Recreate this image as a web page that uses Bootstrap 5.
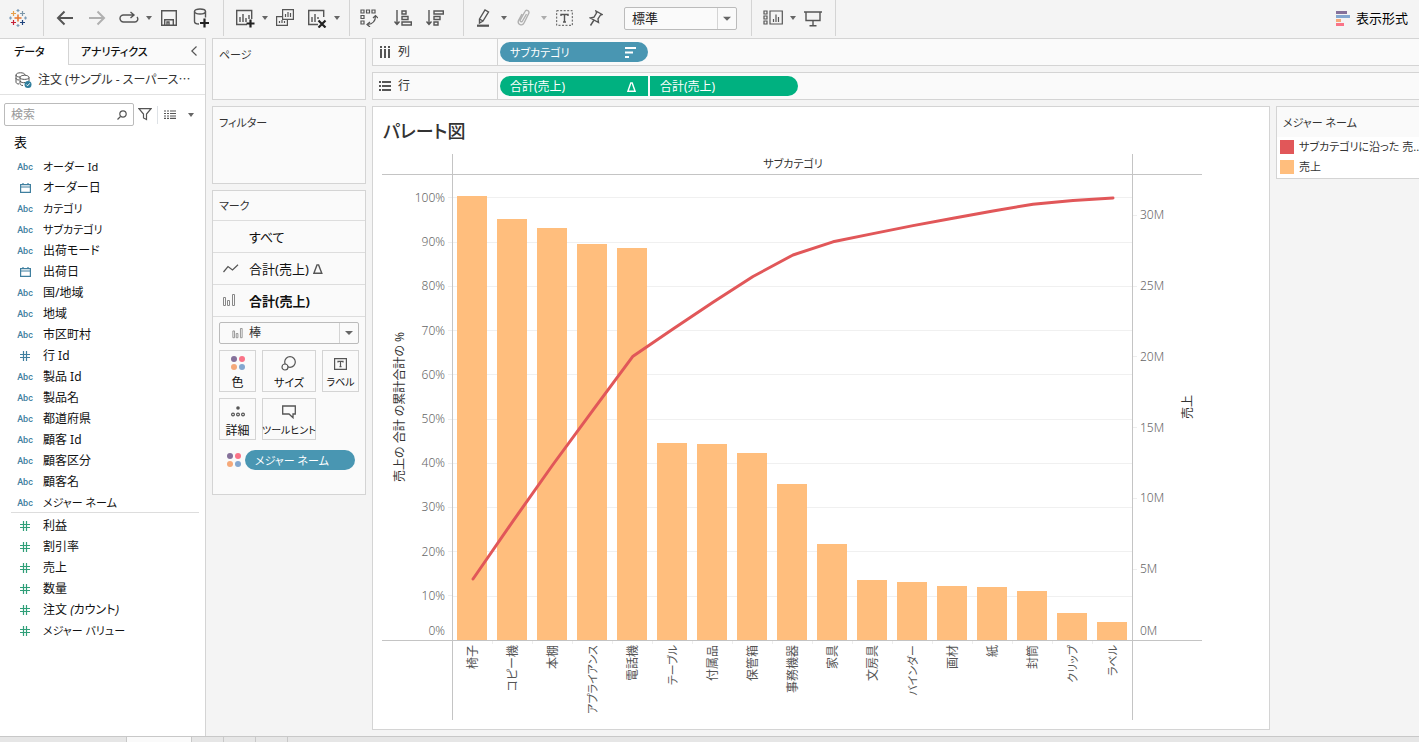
<!DOCTYPE html>
<html lang="ja">
<head>
<meta charset="utf-8">
<meta name="viewport" content="width=device-width, initial-scale=1">
<title>パレート図</title>
<link href="https://cdn.jsdelivr.net/npm/bootstrap@5.3.0/dist/css/bootstrap.min.css" rel="stylesheet">
<style>
:root{--line:#d4d4d4;--panel:#fafafa;--ink:#333;--dim:#3f7f9f;--mea:#2f9f78}
body{font-family:"Noto Sans","Noto Sans CJK JP",sans-serif;font-size:12px;line-height:20px;color:var(--ink);background:#f4f4f4;font-feature-settings:"palt"}
button,select,input{font:inherit;font-feature-settings:inherit;color:inherit}
button{background:none;border:0;padding:0}
svg{display:block;flex:none}
.kana{font-size:11px}
.ic{fill:none;stroke:#555;stroke-width:1.4}
.toolbar{height:38px}
.tgroup{border-right:1px solid var(--line);height:36px;padding:0 10px 0 9px}
.tgroup button{width:24px;height:24px;display:flex;align-items:center;justify-content:center}
.tgroup button.caret{width:16px}
.tgroup button+button:not(.caret){margin-left:8px}
.tgroup .caret+button:not(.caret){margin-left:0}
.logo{width:44px;padding-right:0}
.caret::after{content:"";border:3px solid transparent;border-top:4px solid #666;border-bottom:0}
.pick{appearance:none;border:1px solid #bbb;border-radius:2px;background:#fafafa url("data:image/svg+xml,%3Csvg xmlns='http://www.w3.org/2000/svg' width='19' height='22'%3E%3Cpath d='M.5 0v22' stroke='%23d4d4d4'/%3E%3Cpath d='M6 9h8l-4 4z' fill='%23666'/%3E%3C/svg%3E") no-repeat right center;padding:0 20px 0 7px}
.pick-zoom{width:113px;height:23px;font-size:13px;line-height:20px;color:#222}
.show-me{height:36px;padding-right:11px;font-size:13px;color:#000}
.side{width:206px;border:1px solid var(--line);border-left:0;border-bottom:0}
.tab-on,.tab-off{height:26px;font-weight:500;color:#111;text-decoration:none;font-size:11px}
.tab-on{width:68px;padding:3px 0 0 14px}
.tab-off{background:var(--panel);border-left:1px solid var(--line);border-bottom:1px solid var(--line);padding:3px 0 0 12px}
.source{height:30px;border-bottom:1px solid #e2e2e2;padding-left:15px;gap:6px}
.find{width:130px;height:23px;border:1px solid #bbb;border-radius:2px;padding-left:6px}
.find input{border:0;outline:0;width:106px;padding:0;background:none;line-height:20px}
.find input::placeholder{color:#999}
.rule{height:18px;margin:0 6px 0 5px}
.side-title{font-size:13px;line-height:17px;padding-left:14px}
.field{height:21px;gap:9px;padding:2px 0 0 16px;color:#111}
.field .kind{width:18px;display:flex;justify-content:center;color:var(--dim);font:500 9px/20px Roboto,sans-serif}
.meas .kind{color:var(--mea)}
.kind svg{fill:none;stroke:currentColor;stroke-width:1.2}
.divide{height:1px;background:#ddd;margin:0 6px 1px 11px}
.cards{width:154px;gap:6px;margin:0 6px}
.pane{background:var(--panel);border:1px solid var(--line)}
.pane-title{padding:6px 6px 0;font-size:11px}
.pages{height:62px}
.filters{height:78px}
.marks-title{height:30px;border-bottom:1px solid #ddd;padding-top:5px}
.mrow{height:32px;border-bottom:1px solid #ddd;font-size:13px;color:#111;width:100%;display:flex;align-items:center}
.mrow .slot{width:36px;padding-left:10px}
.mark-body{width:140px;margin:5px auto 24px;row-gap:6px}
.mark-type{width:140px;height:22px;padding-left:29px;grid-area:1/1}
.mark-glyph{grid-area:1/1;margin-left:13px;pointer-events:none}
.mark-grid{display:grid;grid-template-columns:37px 54px 37px;gap:6px;width:140px}
.mark-grid button{height:42px;border:1px solid var(--line);display:flex;flex-direction:column;align-items:center;justify-content:space-between;padding-top:5px;line-height:17px;color:#111;white-space:nowrap}
.tiny{font-size:10px}
.pill{height:20px;border-radius:10px;color:#fff;background:#4996b2;padding:1px 12px 0 10px;display:flex;align-items:center;justify-content:space-between}
.w-pill{width:148px}
.green{background:#00b180}
.shelf{height:28px;border-right:0;margin-bottom:6px}
.shelf-name{width:125px;border-right:1px solid var(--line);padding-left:6px;gap:7px}
.pills{gap:2px;padding-left:2px}
.view{background:#fff;border:1px solid var(--line);padding:10px 9px 9px;margin-bottom:6px}
.view h1{font-size:18px;line-height:28px;font-weight:500;margin:0 0 9px 1px}
.pareto{display:grid;grid-template-columns:71px minmax(0,680px) 69px;grid-template-rows:21px minmax(300px,1fr) 79px}
.pareto>*{min-width:0;min-height:0}
.bb{border-bottom:1px solid #c4c4c4}
.br{border-right:1px solid #c4c4c4}
.bl{border-left:1px solid #c4c4c4;margin-left:-1px}
.plot{display:grid;grid-template:minmax(0,1fr)/minmax(0,1fr)}
.plot>*{grid-area:1/1;width:100%;height:100%}
.cols{display:flex}
.cols>div{flex:1 0 0;padding:0 6px 0 4px;height:100%;display:flex;align-items:flex-end}
.cols i{display:block;width:100%;background:#ffbe7d}
.trace{fill:none;stroke:#e15759;stroke-width:3;stroke-linejoin:round;stroke-linecap:round}
.scale{display:flex;flex-direction:column;color:#666;font-weight:300}
.scale .top-pct{flex:.52 0 0}
.scale .top-m{flex:.572 0 0}
.scale .step{flex:1 0 0;min-height:0;display:flex;flex-direction:column;justify-content:space-between}
.lbl{display:flex;align-items:center;height:20px;margin-top:-10px;gap:3px}
.lbl::after,.lbl-r::before{content:"";width:4px;height:1px;background:#eee}
.lbl-r::after{display:none}
.zero{line-height:18px;padding:0 7px}
.grid-row{flex:1 0 0;border-top:1px solid #f0f0f0}
.turn{writing-mode:vertical-rl;text-orientation:sideways;transform:rotate(180deg);white-space:nowrap}
.names{display:flex;color:#555}
.names>div{flex:1 0 0;display:flex;flex-direction:column;align-items:center}
.names>div::before{content:"";align-self:stretch;height:3px;margin-bottom:1px;border-right:1px solid #eee}
.legend{width:143px}
.legend .pane{border-right:0}
.keys{padding:0 0 1px 3px}
.keys>div{gap:5px}
.swatch{width:14px;height:14px;flex:none}
.red-key{background:#e15759}
.orange-key{background:#ffbe7d}
.min-0{min-width:0}
.dock{height:6px;background:#e6e6e6;border-top:1px solid #c8c8c8}
.dock span{border-right:1px solid #c8c8c8;width:32px}
.dock .nav-area{width:127px}
.dock .sheet-on{width:65px;background:#fafafa}
</style>
</head>
<body>
<svg width="0" height="0" class="position-absolute" aria-hidden="true">
<defs>
<symbol id="dots" viewBox="0 0 14 14"><circle cx="3" cy="3" r="3" fill="#85719a"/><circle cx="11" cy="3" r="3" fill="#fa7387"/><circle cx="3" cy="11" r="3" fill="#f5a97a"/><circle cx="11" cy="11" r="3" fill="#83a7d0"/></symbol>
<symbol id="bars" viewBox="0 0 12 13"><path d="M.5 3.500h2v8h-2zM4.500 6.500h2v5h-2zM9.500.5h2v11h-2z" fill="none" stroke="#888"/></symbol>
<symbol id="date" viewBox="0 0 11 10"><path d="M.6 1.600h9.800v7.800H.6zM.6 4h9.800M3 0v2M8 0v2"/></symbol>
<symbol id="hash" viewBox="0 0 10 10"><path d="M3.500 0v10M6.500 0v10M0 3.500h10M0 6.500h10"/></symbol>
</defs>
</svg>
<div class="d-flex flex-column min-vh-100">
<header class="toolbar d-flex align-items-start">
  <div class="d-flex">
    <div class="tgroup logo d-flex align-items-center">
      <a href="#" aria-label="Tableau"><svg width="18" height="18" viewBox="0 0 18 18" fill="none" stroke-width="1.200"><path d="M9 5.500v7M5.500 9h7" stroke="#e8762c" stroke-width="1.500"/><path d="M4.500 2v5M2 4.500h5" stroke="#e6a04c"/><path d="M13.500 2v5M11 4.500h5" stroke="#7a95a8"/><path d="M4.500 11v5M2 13.500h5" stroke="#c72037"/><path d="M13.500 11v5M11 13.500h5" stroke="#1f447e"/><path d="M9 0v3M7.500 1.500h3M9 15v3M7.500 16.500h3M1.500 7.500v3M0 9h3M16.500 7.500v3M15 9h3" stroke="#7d9cb8"/></svg></a>
    </div>
    <div class="tgroup d-flex align-items-center">
      <button aria-label="戻る"><svg class="ic" width="18" height="16" style="stroke-width:2"><path d="M17 8H2M8.500 1.500L2 8l6.500 6.500"/></svg></button>
      <button aria-label="進む"><svg class="ic" width="18" height="16" style="stroke:#b0b0b0;stroke-width:2"><path d="M1 8h15M9.500 1.500L16 8l-6.500 6.500"/></svg></button>
      <button aria-label="再生"><svg class="ic" width="20" height="14"><path d="M14 4H4.500a3.200 3.200 0 0 0 0 7h11a3 3 0 0 0 2.500-5M11.500 1l3.500 3-3.500 3"/></svg></button><button class="caret" aria-label="再生メニュー"></button>
      <button aria-label="保存"><svg class="ic" width="16" height="16"><path d="M.7.7h14.600v14.600H.7zM3.700 15V9.700h8.600V15M6 15v-3h2v3"/></svg></button>
      <button aria-label="新しいデータ ソース"><svg class="ic" width="16" height="20"><ellipse cx="7" cy="3.500" rx="5.500" ry="2.500"/><path d="M1.500 3.500v10c0 1.500 2 2.500 4.500 2.500M12.500 3.500v6"/><path d="M11.500 10.500v9M7 15h9" stroke="#222" stroke-width="2.200"/></svg></button>
    </div>
    <div class="tgroup d-flex align-items-center pe-1">
      <button aria-label="新しいワークシート"><svg class="ic" width="20" height="20"><path d="M12 16.500H1.700v-14h15V11M5 14V9M8 14V6M11 14v-4M14 11V7"/><path d="M15.500 11.500v8M11.500 15.500h8" stroke="#222" stroke-width="2.200"/></svg></button><button class="caret" aria-label="ワークシート メニュー"></button>
      <button aria-label="複製"><svg class="ic" width="18" height="18" style="stroke-width:1.200"><path d="M6.600.6h10.800v9.800H6.600zM9.500 8V5M12 8V3M14.500 8V4M6 7.600H.6v8.800h10.800V11M3.500 14v-2M6 14v-3M8.500 14v-2"/></svg></button>
      <button aria-label="クリア"><svg class="ic" width="20" height="20"><path d="M11 16.500H1.700v-14h15V9M5 14V9M8 14V6M11 11V9"/><path d="M11.500 12.500l7 7M18.500 12.500l-7 7" stroke="#222" stroke-width="2.200"/></svg></button><button class="caret" aria-label="クリア メニュー"></button>
    </div>
    <div class="tgroup d-flex align-items-center pe-3">
      <button class="pe-1 me-n1" aria-label="行と列の交換"><svg class="ic" width="18" height="18" style="stroke-width:1.200"><path d="M1 1h3v3H1zM6.500 1h3v3h-3zM12 1h3v3h-3zM1 6.500h3v3H1zM1 12h3v3H1zM15.500 7c0 5-3 8-8 8.500M13 9l2.500-2.500L18 9M10 13l-3 2.500 3 2.500"/></svg></button>
      <button aria-label="昇順"><svg class="ic" width="18" height="16"><path d="M3 0v14M.5 11.500L3 14.500l2.500-3M8 1h4v3H8zM8 6.500h6v3H8zM8 12h9.300v3H8z"/></svg></button>
      <button aria-label="降順"><svg class="ic" width="18" height="16"><path d="M3 0v14M.5 11.500L3 14.500l2.500-3M8 1h9.300v3H8zM8 6.500h6v3H8zM8 12h4v3H8z"/></svg></button>
    </div>
    <div class="tgroup d-flex align-items-center ps-2">
      <button aria-label="ハイライト"><svg class="ic" width="16" height="18"><path d="M3.500 10L9 1l3.500 2L7 12l-3.500 2zM3.500 10L7 12"/><path d="M1 16.700h12" stroke-width="2.200"/></svg></button><button class="caret" aria-label="ハイライト メニュー"></button>
      <button aria-label="グループ"><svg class="ic" width="14" height="18" style="stroke:#b0b0b0"><path d="M9.500 5L5.500 12c-.8 1.600-3 .5-2.200-1L8 2.500c1.200-2.300 5-.6 3.700 2L7 14c-1.700 3.500-7 1.500-5.500-2.500L5 5"/></svg></button><button class="caret opacity-50" aria-label="グループ メニュー"></button>
      <button aria-label="ラベル表示"><svg class="ic" width="17" height="16"><rect x=".7" y=".7" width="15.600" height="14.600" stroke-dasharray="2 1.500" stroke-width="1"/><path d="M5 6V4.500h7V6M8.500 4.500v7.500M7 12h3"/></svg></button>
      <button aria-label="固定"><svg class="ic" width="14" height="16"><path d="M7 1l6 3.500-1.500.5-2.500 4 .5 3.500L1.500 8l3.500-.8L7.500 3zM5 10l-3.500 5.500"/></svg></button>
      <select class="pick pick-zoom ms-3 me-1" aria-label="サイズ"><option>標準</option></select>
    </div>
    <div class="tgroup d-flex align-items-center">
      <button aria-label="カードの表示"><svg class="ic" width="20" height="16"><path d="M1 1h3v3H1zM1 6h3v3H1zM1 11h3v3H1zM7 1h12.300v13H7zM10.500 12V9M13 12V4.500M15.500 12V7" stroke-width="1.200"/></svg></button><button class="caret" aria-label="カード メニュー"></button>
      <button aria-label="プレゼンテーション モード"><svg class="ic" width="18" height="17"><path d="M0 2h18M2 2v8.500h14V2M9 10.500V16M5.500 15.800h7"/></svg></button>
    </div>
  </div>
  <button class="show-me ms-auto d-flex align-items-center"><svg class="me-1" width="16" height="16"><path d="M0 1h11v3H0z" fill="#85719a"/><path d="M0 5h14v3H0z" fill="#83a7d0"/><path d="M0 9h5v3H0z" fill="#f5a97a"/><path d="M0 13h8v3H0z" fill="#fa7387"/></svg>表示形式</button>
</header>

<div class="d-flex flex-grow-1">
  <aside class="side bg-white flex-shrink-0">
    <nav class="d-flex">
      <a class="tab-on" href="#">データ</a>
      <a class="tab-off d-flex flex-grow-1 justify-content-between" href="#"><span>アナリティクス</span><svg class="ic me-2 mt-1" width="6" height="10" style="stroke-width:1.200"><path d="M5.500.5L.8 5l4.700 4.500"/></svg></a>
    </nav>
    <div class="source d-flex align-items-center"><svg class="ic" width="17" height="16" style="stroke-width:1"><path d="M1 3v7c0 1 1 2 3 2M1 3c0-3 9-3 9 0M1 3c0 1.500 2 2 4 2M1 6c0 1 1 2 3 2M5 5.500v6c0 1 1 2 3 2M5 5.500c0-3 9-3 9 0V9M5 5.500c0 2.500 9 2.500 9 0M5 9c1 1.500 3 2 5 1.500"/><circle cx="13" cy="12.500" r="3.500" fill="#2e7d9c" stroke="none"/><path d="M11.300 12.500l1.300 1.300 2.200-2.500" stroke="#fff"/></svg><span>注文 (サンプル - スーパース⋯</span></div>
    <div class="d-flex align-items-center pt-2 ps-1">
      <label class="find d-flex align-items-center bg-white"><input placeholder="検索" aria-label="検索"><svg class="ic" width="10" height="10" style="stroke-width:1.200"><circle cx="6" cy="4" r="3.200"/><path d="M3.500 6.500L.5 9.500"/></svg></label>
      <button class="ms-1" aria-label="フィルター"><svg class="ic" width="14" height="13" style="stroke-width:1.200"><path d="M1 .7h12L8.500 6v5.500L5.500 10V6z"/></svg></button>
      <span class="border-start rule"></span>
      <button aria-label="表示"><svg class="ic" width="12" height="9" style="stroke-width:1.200"><path d="M0 1h12M0 3.500h12M0 6h12M0 8.400h12" stroke-dasharray="2 1 2 1 6"/></svg></button>
      <button class="caret ms-1 d-flex p-1 ps-2" aria-label="表示メニュー"></button>
    </div>
    <div class="side-title text-black mt-2 pb-1">表</div>
    <div id="dims"></div>
    <div class="divide"></div>
    <div id="meas" class="meas"></div>
  </aside>

  <section class="cards d-flex flex-column flex-shrink-0">
    <div class="pane pane-title pages">ページ</div>
    <div class="pane pane-title filters">フィルター</div>
    <div class="pane">
      <div class="pane-title marks-title">マーク</div>
      <button class="mrow"><span class="slot"></span>すべて</button>
      <button class="mrow"><span class="slot"><svg class="ic" width="16" height="9" style="stroke-width:1.200"><path d="M.5 8L5 2.500l4.500 3.500L15 .8"/></svg></span>合計(売上)<svg class="ic ms-1" width="10" height="10"><path d="M.9 9.200L4 .9h1.600l3.200 8.300z"/></svg></button>
      <button class="mrow fw-bold"><span class="slot"><svg width="12" height="13"><use href="#bars"/></svg></span>合計(売上)</button>
      <div class="mark-body d-grid">
          <label class="d-grid align-items-center"><select class="pick mark-type" aria-label="マーク タイプ"><option>棒</option></select><svg class="mark-glyph" width="11" height="11"><use href="#bars"/></svg></label>
          <div class="mark-grid">
            <button><svg width="14" height="14"><use href="#dots"/></svg>色</button>
            <button class="kana"><svg class="ic" width="16" height="15" style="stroke-width:1.200"><circle cx="9" cy="6" r="5.300"/><circle cx="4" cy="11" r="3" fill="#fafafa"/></svg>サイズ</button>
            <button class="tiny"><svg class="ic" width="13" height="14" style="stroke-width:1.200"><path d="M.6 2.600h11.800v10.800H.6zM4 6.500V5.300h5v1.200M6.500 5.300v5.400M5.500 10.700h2"/></svg>ラベル</button>
            <button><svg class="ic" width="14" height="14" style="stroke-width:1.200"><circle cx="7" cy="4" r="1.800" fill="#555" stroke="none"/><circle cx="2" cy="10.500" r="1.400"/><circle cx="7" cy="10.500" r="1.400"/><circle cx="12" cy="10.500" r="1.400"/></svg>詳細</button>
            <button class="tiny"><svg class="ic" width="14" height="15" style="stroke-width:1.300"><path d="M.7 2h12.600v8h-2.300v3.700L7 10H.7z"/></svg>ツールヒント</button>
          </div>
          <div class="d-flex align-items-center mt-1 ms-2"><svg class="me-1" width="14" height="14"><use href="#dots"/></svg><a href="#" class="pill kana text-decoration-none flex-grow-1 me-1">メジャー ネーム</a></div>
      </div>
    </div>
  </section>

  <main class="flex-grow-1 d-flex flex-column min-0">
    <div class="pane shelf d-flex">
      <div class="shelf-name d-flex align-items-center"><svg width="12" height="12"><path d="M1 0h2v2H1zM5 0h2v2H5zM9 0h2v2H9zM1 3h2v9H1zM5 3h2v9H5zM9 3h2v9H9z" fill="#555"/></svg>列</div>
      <div class="pills d-flex align-items-center"><div class="pill w-pill kana">サブカテゴリ<svg width="11" height="11" stroke="#fff" stroke-width="2"><path d="M0 1h11M0 5.500h8M0 10h4"/></svg></div></div>
    </div>
    <div class="pane shelf d-flex">
      <div class="shelf-name d-flex align-items-center"><svg width="12" height="11"><path d="M0 0h2v2H0zM3 0h9v2H3zM0 4h2v2H0zM3 4h9v2H3zM0 8h2v2H0zM3 8h9v2H3z" fill="#555"/></svg>行</div>
      <div class="pills d-flex align-items-center"><div class="pill w-pill green rounded-end-0">合計(売上)<svg width="9" height="10" fill="none" stroke="#fff" stroke-width="1.400"><path d="M.9 9.200L3.800.9h1.400l2.900 8.300z"/></svg></div><div class="pill w-pill green rounded-start-0">合計(売上)</div></div>
    </div>
    <div class="d-flex flex-grow-1" style="gap:6px">
      <article class="view flex-grow-1 d-flex flex-column min-0">
        <h1>パレート図</h1>
        <div class="pareto flex-grow-1">
          <div class="bb br"></div><div class="bb text-center kana">サブカテゴリ</div><div class="bb bl"></div>
          <div class="bb br d-flex">
            <div class="d-flex align-items-center ps-2"><span class="turn">売上の 合計 の累計合計の %</span></div>
            <div id="pct" class="scale flex-grow-1"><div class="top-pct"></div></div>
          </div>
          <div class="bb plot">
            <div id="lines" class="scale"><div class="top-pct"></div></div>
            <div id="cols" class="cols"></div>
            <svg id="curve" viewBox="0 0 680 465" preserveAspectRatio="none"><polyline class="trace" vector-effect="non-scaling-stroke"/></svg>
          </div>
          <div class="bb bl d-flex">
            <div id="mil" class="scale flex-grow-1"><div class="top-m"></div></div>
            <div class="d-flex align-items-center pe-1"><span class="turn">売上</span></div>
          </div>
          <div class="br"></div><div id="names" class="names"></div><div class="bl"></div>
        </div>
      </article>
      <aside class="legend flex-shrink-0">
        <div class="pane">
          <div class="pane-title pb-1">メジャー ネーム</div>
          <div class="keys bg-white kana">
            <div class="d-flex align-items-center"><span class="swatch red-key"></span><span class="text-nowrap">サブカテゴリに沿った 売..</span></div>
            <div class="d-flex align-items-center"><span class="swatch orange-key"></span>売上</div>
          </div>
        </div>
      </aside>
    </div>
  </main>
</div>
<footer class="dock d-flex"><span class="nav-area"></span><span class="sheet-on"></span><span></span><span></span><span></span></footer>
</div>

<script src="https://cdn.jsdelivr.net/npm/bootstrap@5.3.0/dist/js/bootstrap.bundle.min.js"></script>
<script>
const el = id => document.getElementById(id);
const icons = {
  a: 'Abc',
  d: '<svg width="11" height="10" class="align-self-center"><use href="#date"/></svg>',
  n: '<svg width="10" height="10" class="align-self-center"><use href="#hash"/></svg>'
};
// Labels made of kana alone are set one size smaller
const size = s => /[\u4e00-\u9fff]/.test(s) ? '' : 'kana';
const field = ([kind, name]) => `<div class="field d-flex align-items-center"><span class="kind">${icons[kind]}</span><span class="${size(name)}">${name}</span></div>`;
el('dims').innerHTML = [['a','オーダー Id'],['d','オーダー日'],['a','カテゴリ'],['a','サブカテゴリ'],['a','出荷モード'],['d','出荷日'],['a','国/地域'],['a','地域'],['a','市区町村'],['n','行 Id'],['a','製品 Id'],['a','製品名'],['a','都道府県'],['a','顧客 Id'],['a','顧客区分'],['a','顧客名'],['a','メジャー ネーム']].map(field).join('');
el('meas').innerHTML = ['利益','割引率','売上','数量','注文 <em>(</em>カウント<em>)</em>','メジャー バリュー'].map(n => field(['n', n])).join('');

// Sales per sub-category, in units of the plot's 465-unit height
const sales = [['椅子',444],['コピー機',421],['本棚',412],['アプライアンス',396],['電話機',392],['テーブル',197],['付属品',196],['保管箱',187],['事務機器',156],['家具',96],['文房具',60],['バインダー',58],['画材',54],['紙',53],['封筒',49],['クリップ',27],['ラベル',18]];
const full = 465, hundred = 442;
const total = sales.reduce((s, r) => s + r[1], 0);
el('cols').innerHTML = sales.map(r => `<div><i style="height:${r[1] / full * 100}%"></i></div>`).join('');
el('names').innerHTML = sales.map(r => `<div><span class="turn ${size(r[0])}">${r[0]}</span></div>`).join('');
let run = 0;
document.querySelector('.trace').setAttribute('points', sales.map((r, i) => {
  run += r[1];
  return `${i * 40 + 20},${(full - hundred * run / total).toFixed(1)}`;
}).join(' '));
for (let p = 100; p > 0; p -= 10) {
  el('pct').innerHTML += `<div class="step"><div class="lbl justify-content-end">${p}%</div>${p === 10 ? '<div class="zero text-end">0%</div>' : ''}</div>`;
  el('lines').innerHTML += '<div class="grid-row"></div>';
}
for (let m = 30; m > 0; m -= 5)
  el('mil').innerHTML += `<div class="step"><div class="lbl lbl-r">${m}M</div>${m === 5 ? '<div class="zero">0M</div>' : ''}</div>`;
</script>
</body>
</html>
